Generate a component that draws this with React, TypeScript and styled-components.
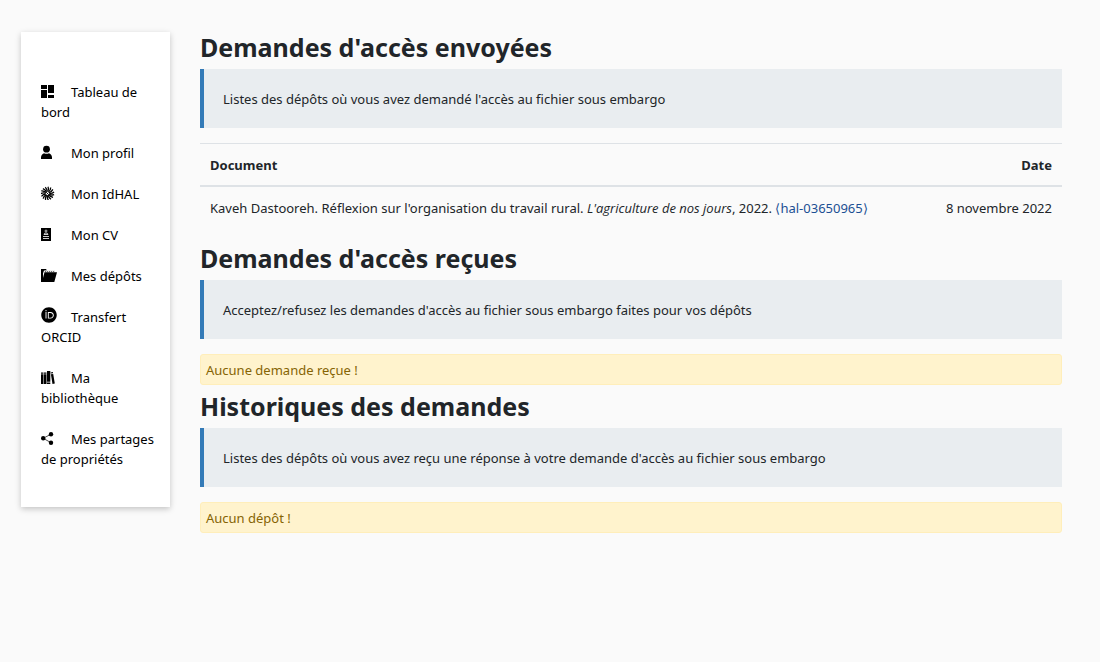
import React from "react";
import styled, { createGlobalStyle } from "styled-components";
import { FaOrcid } from "react-icons/fa";

const GlobalStyle = createGlobalStyle`
  *, *::before, *::after { box-sizing: border-box; }
  body {
    margin: 0;
    background: #fafafa;
    color: #212529;
    font-family: "Noto Sans", "Liberation Sans", sans-serif;
    font-size: 13px;
    line-height: 20px;
  }
`;

const Page = styled.div`
  display: flex;
  align-items: flex-start;
  gap: 30px;
  padding: 32px 38px 32px 21px;
`;

const Sidebar = styled.nav`
  flex: 0 0 149px;
  padding: 50px 15px 38px 20px;
  background: #fff;
  box-shadow: 0 2px 6px rgba(0, 0, 0, 0.22);
`;

const Menu = styled.ul`
  display: flex;
  flex-direction: column;
  gap: 21px;
  margin: 0;
  padding: 0;
  list-style: none;
`;

const MenuLink = styled.a`
  display: block;
  color: #000;
  text-decoration: none;

  svg {
    width: 16px;
    height: 16px;
    margin-right: 14px;
    vertical-align: top;
  }
`;

const Main = styled.main`
  flex: 1;
  min-width: 0;
`;

const Title = styled.h2`
  margin: 0 0 6px;
  font-size: 25px;
  font-weight: 700;
  line-height: 31px;
`;

const Callout = styled.p`
  margin: 0 0 15px;
  padding: 20px 20px 19px 19px;
  border-left: 4px solid #337ab7;
  background: #e9edf0;
`;

const Notice = styled.div`
  margin-bottom: 6px;
  padding: 5px 5px 4px;
  border: 1px solid #ffeeba;
  border-radius: 3px;
  background: #fff3cd;
  color: #856404;
`;

const Table = styled.table`
  width: 100%;
  margin-bottom: 15px;
  border-spacing: 0;
`;

const HeadCell = styled.th<{ $end?: boolean }>`
  padding: 11px 10px 10px;
  border-top: 1px solid #dee2e6;
  border-bottom: 2px solid #dee2e6;
  text-align: ${(p) => (p.$end ? "right" : "left")};
`;

const Cell = styled.td<{ $end?: boolean }>`
  padding: 11px 10px 10px;
  text-align: ${(p) => (p.$end ? "right" : "left")};
`;

const Journal = styled.i`
  font-family: "Open Sans", "Noto Sans", sans-serif;
`;

const DocLink = styled.a`
  color: #1b4f93;
  text-decoration: none;
`;

const Icon = ({ children }: { children: React.ReactNode }) => (
  <svg viewBox="0 0 16 16" fill="currentColor" aria-hidden="true">
    {children}
  </svg>
);

const rays = Array.from({ length: 15 }, (_, i) => i * 24);

const items = [
  {
    label: "Tableau de bord",
    icon: (
      <Icon>
        <path d="M0 3h6v4H0zM0 8h6v8H0zM7 3h6v8H7zM7 13h6v3H7z" />
      </Icon>
    ),
  },
  {
    label: "Mon profil",
    icon: (
      <Icon>
        <circle cx="5.5" cy="6.2" r="3.4" />
        <path d="M0 16v-1.500Q0 11.500 3 10.200Q5.500 11.500 8 10.200Q11 11.500 11 14.500V16z" />
      </Icon>
    ),
  },
  {
    label: "Mon IdHAL",
    icon: (
      <Icon>
        <g fill="none" stroke="currentColor" strokeWidth="1.300">
          {rays.map((a) => (
            <path key={a} d="M6.800 7.700Q8.200 5.500 7 2.800" transform={`rotate(${a} 6.5 9.5)`} />
          ))}
          <path d="M5 8l3 3M5.500 10.500l2-2" strokeWidth=".8" />
        </g>
      </Icon>
    ),
  },
  {
    label: "Mon CV",
    icon: (
      <Icon>
        <path d="M0 3h10v13H0z" />
        <g fill="none" stroke="#fff">
          <circle cx="5" cy="6" r="1" strokeWidth=".7" />
          <path d="M3 9.500Q3 8 5 8T7 9.500z" strokeWidth=".8" />
          <path d="M2 11.500h6M2 13.500h6" strokeWidth=".8" />
        </g>
      </Icon>
    ),
  },
  {
    label: "Mes dépôts",
    icon: (
      <Icon>
        <path d="M0 3h5l1 1.500H3L0 13z" />
        <path d="M3 6.500L4.500 4.500h9.500v2" fill="#ddd" />
        <path d="M0 3h2v9L3.500 6.300H16L13.300 16H0z" />
        <path d="M4 5.500h9.500" stroke="currentColor" strokeWidth=".5" strokeDasharray="1 1" />
      </Icon>
    ),
  },
  { label: "Transfert ORCID", icon: <FaOrcid aria-hidden="true" /> },
  {
    label: "Ma bibliothèque",
    icon: (
      <Icon>
        <path d="M0 4.500h2.500v1.200H0zM0 6.300h2.500V16H0zM3 4.500h2.500v1.200H3zM3 6.300h2.500V16H3z" />
        <path d="M6 3h3.300v10.800H6zM6 14.500h3.300V16H6z" />
        <path d="M9.600 4.500L11.900 4.100L12.100 5.200L9.800 5.600zM9.900 6.300L12.200 5.900L13.800 15.600L11.500 16z" />
      </Icon>
    ),
  },
  {
    label: "Mes partages de propriétés",
    icon: (
      <Icon>
        <path d="M10 5.200L2.200 9.300L10 13.700" fill="none" stroke="currentColor" strokeWidth=".7" />
        <circle cx="2.200" cy="9.300" r="2.200" />
        <circle cx="10" cy="5.200" r="2.200" />
        <circle cx="10" cy="13.700" r="2.200" />
      </Icon>
    ),
  },
];

export default function App() {
  return (
    <>
      <GlobalStyle />
      <Page>
        <Sidebar>
          <Menu>
            {items.map((item) => (
              <li key={item.label}>
                <MenuLink href="#">
                  {item.icon}
                  {item.label}
                </MenuLink>
              </li>
            ))}
          </Menu>
        </Sidebar>
        <Main>
          <section>
            <Title>Demandes d'accès envoyées</Title>
            <Callout>Listes des dépôts où vous avez demandé l'accès au fichier sous embargo</Callout>
            <Table>
              <thead>
                <tr>
                  <HeadCell scope="col">Document</HeadCell>
                  <HeadCell scope="col" $end>Date</HeadCell>
                </tr>
              </thead>
              <tbody>
                <tr>
                  <Cell>
                    Kaveh Dastooreh. Réflexion sur l'organisation du travail rural.{" "}
                    <Journal>L'agriculture de nos jours</Journal>, 2022.{" "}
                    <DocLink href="#">⟨hal-03650965⟩</DocLink>
                  </Cell>
                  <Cell $end>8 novembre 2022</Cell>
                </tr>
              </tbody>
            </Table>
          </section>
          <section>
            <Title>Demandes d'accès reçues</Title>
            <Callout>Acceptez/refusez les demandes d'accès au fichier sous embargo faites pour vos dépôts</Callout>
            <Notice>Aucune demande reçue !</Notice>
          </section>
          <section>
            <Title>Historiques des demandes</Title>
            <Callout>Listes des dépôts où vous avez reçu une réponse à votre demande d'accès au fichier sous embargo</Callout>
            <Notice>Aucun dépôt !</Notice>
          </section>
        </Main>
      </Page>
    </>
  );
}
